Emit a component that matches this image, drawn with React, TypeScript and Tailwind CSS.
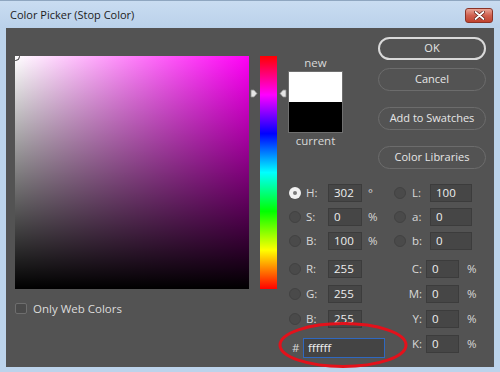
import React from 'react';

const Radio = ({ checked = false }: { checked?: boolean }) =>
  checked ? (
    <span className="w-[12px] h-[12px] rounded-full bg-[#f2f2f2] flex items-center justify-center shrink-0">
      <span className="w-[4px] h-[4px] rounded-full bg-[#7a7a7a]" />
    </span>
  ) : (
    <span className="w-[12px] h-[12px] rounded-full bg-[#4a4a4a] border border-[#424242] shrink-0" />
  );

const Field = ({ value, w }: { value: string; w: string }) => (
  <div
    className={`${w} h-[18px] bg-[#464646] border border-[#3c3c3c] flex items-center pl-[5px] text-[#eeeeee] leading-none`}
  >
    {value}
  </div>
);

const Btn = ({ label, primary = false, className = '' }: { label: string; primary?: boolean; className?: string }) => (
  <button
    className={`w-[108px] h-[23px] rounded-full flex items-center justify-center text-[11px] text-[#e6e6e6] bg-[#535353] ${
      primary ? 'border-2 border-[#d9d9d9]' : 'border border-[#6c6c6c]'
    } ${className}`}
  >
    {label}
  </button>
);

// left half: radio + label + field + unit, right half: radio + label + field (Lab)
const HsbRow = ({
  l,
  v,
  unit,
  checked,
  rl,
  rv,
}: {
  l: string;
  v: string;
  unit: string;
  checked?: boolean;
  rl: string;
  rv: string;
}) => (
  <div className="flex items-center h-[18px]">
    <div className="flex items-center w-[106px] pl-[1px]">
      <Radio checked={checked} />
      <span className="ml-[5px] w-[22px] text-[#d8d8d8]">{l}</span>
      <Field value={v} w="w-[34px]" />
      <span className="ml-[6px] text-[#d8d8d8]">{unit}</span>
    </div>
    <div className="flex items-center">
      <Radio />
      <span className="ml-[6px] w-[18px] text-[#d8d8d8]">{rl}</span>
      <Field value={rv} w="w-[42px]" />
    </div>
  </div>
);

const CmykPart = ({ l, v }: { l: string; v: string }) => (
  <div className="flex items-center">
    <span className="w-[32px] text-right pr-[4px] text-[#d8d8d8]">{l}</span>
    <Field value={v} w="w-[33px]" />
    <span className="ml-[8px] text-[#d8d8d8]">%</span>
  </div>
);

const RgbRow = ({ l, v, cl, cv, className = '' }: { l: string; v: string; cl: string; cv: string; className?: string }) => (
  <div className={`flex items-center h-[18px] ${className}`}>
    <div className="flex items-center w-[106px] pl-[1px]">
      <Radio />
      <span className="ml-[5px] w-[22px] text-[#d8d8d8]">{l}</span>
      <Field value={v} w="w-[34px]" />
    </div>
    <CmykPart l={cl} v={cv} />
  </div>
);

export default function App() {
  return (
    <div className="relative w-[500px] h-[372px] bg-[#bcd3eb] font-['Open_Sans','Noto_Sans',sans-serif] text-[11.5px] flex flex-col overflow-hidden border-t border-[#8fa6c0]">
      {/* Title bar */}
      <div className="h-[27px] flex items-center justify-between pl-[10px] pr-[7px] bg-[linear-gradient(to_bottom,#c9dcf1,#bad1ea)]">
        <span className="text-[11px] text-[#1c1c1c] mt-[2px]">Color Picker (Stop Color)</span>
        <div className="w-[28px] h-[15px] mt-[2px] rounded-[3px] border border-[#8a3327] bg-[linear-gradient(to_bottom,#e9a597,#d0604f_50%,#c0432f)] flex items-center justify-center">
          <svg width="11" height="9" viewBox="0 0 11 9">
            <path d="M1.5 1 L9.5 8 M9.5 1 L1.5 8" stroke="#5a1a12" strokeWidth="3.2" strokeLinecap="round" />
            <path d="M1.5 1 L9.5 8 M9.5 1 L1.5 8" stroke="#ffffff" strokeWidth="1.8" strokeLinecap="round" />
          </svg>
        </div>
      </div>

      {/* Dialog body */}
      <div className="mx-[6px] h-[339px] bg-[#535353] flex pl-[9px]">
        {/* Color field + checkbox */}
        <div className="flex flex-col pt-[28px]">
          <div className="relative w-[234px] h-[233px] overflow-hidden bg-[linear-gradient(to_right,#ffffff,#ff00f6)]">
            <div className="absolute inset-0 bg-[linear-gradient(to_bottom,rgba(0,0,0,0),#000000)]" />
            <div className="absolute -left-[4px] -top-[4px] w-[9px] h-[9px] rounded-full border-[1.5px] border-[#333333]" />
          </div>
          <div className="flex items-center mt-[11px]">
            <span className="w-[12px] h-[11px] rounded-[2px] bg-[#4a4a4a] border border-[#6e6e6e]" />
            <span className="ml-[6px] text-[#dcdcdc]">Only Web Colors</span>
          </div>
        </div>

        {/* Hue slider */}
        <div className="w-[39px] pt-[28px]">
          <div className="relative ml-[11px] w-[17px] h-[233px] bg-[linear-gradient(to_bottom,#ff0000,#ff00ff_16.67%,#0000ff_33.33%,#00ffff_50%,#00ff00_66.67%,#ffff00_83.33%,#ff0000)]">
            <svg className="absolute -left-[10px] top-[33px]" width="8" height="9" viewBox="0 0 8 9">
              <path d="M1 1 L4 1 L7 4.5 L4 8 L1 8 Z" fill="#e6e6e6" stroke="#8a8a8a" strokeWidth="0.8" />
            </svg>
            <svg className="absolute -right-[10px] top-[33px]" width="8" height="9" viewBox="0 0 8 9">
              <path d="M7 1 L4 1 L1 4.5 L4 8 L7 8 Z" fill="#e6e6e6" stroke="#8a8a8a" strokeWidth="0.8" />
            </svg>
          </div>
        </div>

        {/* Right panel */}
        <div className="flex flex-col pt-[9px]">
          <div className="flex">
            <div className="w-[55px] flex flex-col items-center pt-[18px]">
              <span className="h-[16px] leading-[16px] text-[#d8d8d8]">new</span>
              <div className="w-[55px] h-[62px] border border-[#6f6f6f] flex flex-col">
                <div className="flex-1 bg-white" />
                <div className="flex-1 bg-black" />
              </div>
              <span className="h-[16px] leading-[16px] text-[#d8d8d8]">current</span>
            </div>
            <div className="ml-[35px] flex flex-col">
              <Btn label="OK" primary />
              <Btn label="Cancel" className="mt-[8px]" />
              <Btn label="Add to Swatches" className="mt-[16px]" />
              <Btn label="Color Libraries" className="mt-[16px]" />
            </div>
          </div>

          <div className="mt-[15px] flex flex-col">
            <HsbRow l="H:" v="302" unit="°" checked rl="L:" rv="100" />
            <div className="mt-[6px]">
              <HsbRow l="S:" v="0" unit="%" rl="a:" rv="0" />
            </div>
            <div className="mt-[6px]">
              <HsbRow l="B:" v="100" unit="%" rl="b:" rv="0" />
            </div>
            <RgbRow l="R:" v="255" cl="C:" cv="0" className="mt-[10px]" />
            <RgbRow l="G:" v="255" cl="M:" cv="0" className="mt-[7px]" />
            <RgbRow l="B:" v="255" cl="Y:" cv="0" className="mt-[7px]" />
            <div className="flex items-start mt-[7px]">
              <div className="flex items-center w-[106px] pl-[4px] mt-[3px]">
                <span className="w-[11px] text-[#d8d8d8]">#</span>
                <div className="w-[82px] h-[20px] bg-[#444444] border border-[#2f68c0] flex items-center pl-[4px] text-[#f0f0f0]">
                  ffffff
                </div>
              </div>
              <div className="h-[18px] flex items-center">
                <CmykPart l="K:" v="0" />
              </div>
            </div>
          </div>
        </div>
      </div>

      {/* Annotation ellipse */}
      <svg className="absolute left-[277px] top-[320px]" width="134" height="48" viewBox="0 0 134 48">
        <ellipse cx="66" cy="24" rx="63" ry="21.5" fill="none" stroke="#e3111b" strokeWidth="3" />
      </svg>
    </div>
  );
}
